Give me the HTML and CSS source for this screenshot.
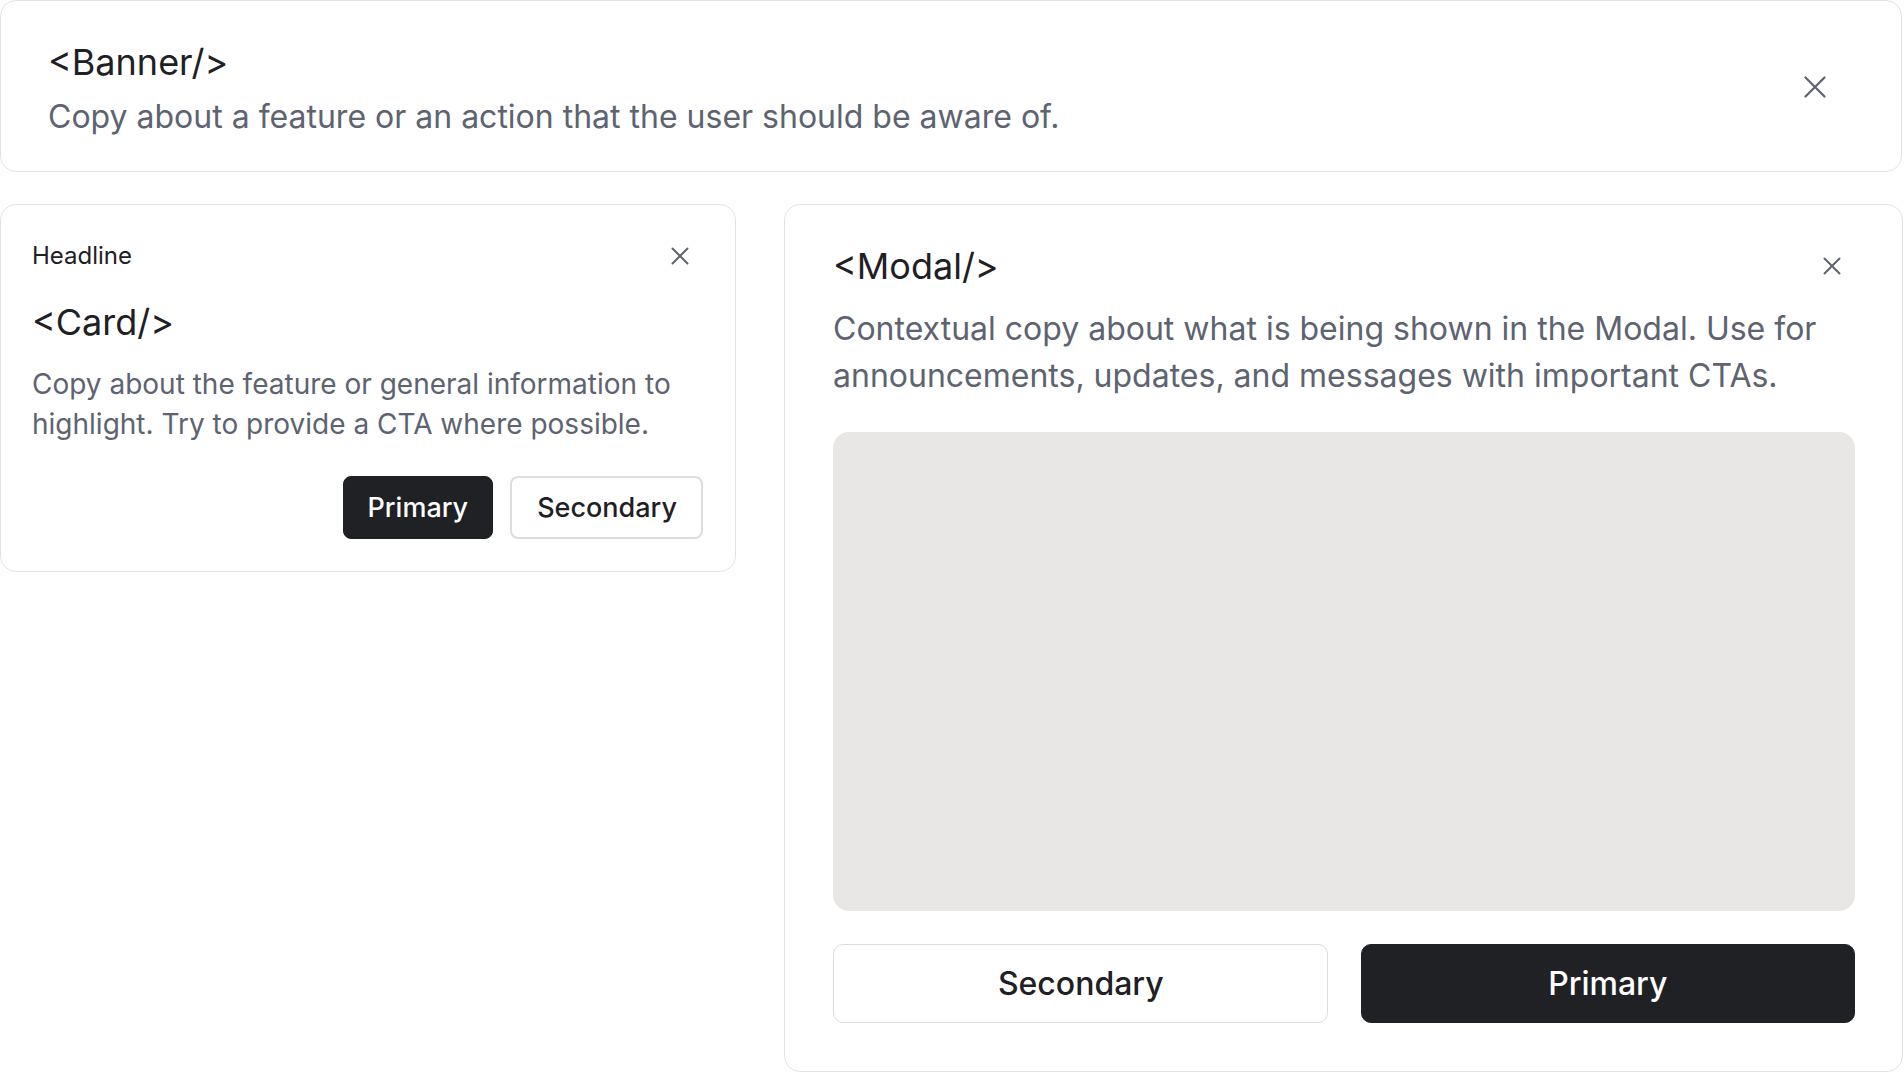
FILE: index.html
```html
<!DOCTYPE html>
<html lang="en">
<head>
<meta charset="utf-8">
<title>Components</title>
<link rel="stylesheet" href="styles.css">
</head>
<body>
<div class="page">
  <section class="banner">
    <div class="banner-text">
      <h2 class="title">&lt;Banner/&gt;</h2>
      <p class="banner-copy">Copy about a feature or an action that the user should be aware of.</p>
    </div>
    <button class="close close-lg" aria-label="Close">
      <svg width="22" height="22" viewBox="0 0 22 22"><path d="M1.5 1.5 L20.5 20.5 M20.5 1.5 L1.5 20.5" stroke="currentColor" stroke-width="2.2" stroke-linecap="round"/></svg>
    </button>
  </section>
  <div class="row">
    <section class="card">
      <div class="card-head">
        <span class="headline">Headline</span>
        <button class="close" aria-label="Close">
          <svg width="18" height="18" viewBox="0 0 18 18"><path d="M1.5 1.5 L16.5 16.5 M16.5 1.5 L1.5 16.5" stroke="currentColor" stroke-width="2" stroke-linecap="round"/></svg>
        </button>
      </div>
      <h2 class="title card-title">&lt;Card/&gt;</h2>
      <p class="card-copy">Copy about the feature or general information to highlight. Try to provide a CTA where possible.</p>
      <div class="card-actions">
        <button class="btn btn-primary">Primary</button>
        <button class="btn btn-secondary">Secondary</button>
      </div>
    </section>
    <section class="modal">
      <div class="modal-head">
        <h2 class="title">&lt;Modal/&gt;</h2>
        <button class="close" aria-label="Close">
          <svg width="18" height="18" viewBox="0 0 18 18"><path d="M1.5 1.5 L16.5 16.5 M16.5 1.5 L1.5 16.5" stroke="currentColor" stroke-width="2" stroke-linecap="round"/></svg>
        </button>
      </div>
      <p class="modal-copy">Contextual copy about what is being shown in the Modal. Use for announcements, updates, and messages with important CTAs.</p>
      <div class="placeholder"></div>
      <div class="modal-actions">
        <button class="btn btn-secondary btn-lg">Secondary</button>
        <button class="btn btn-primary btn-lg">Primary</button>
      </div>
    </section>
  </div>
</div>
</body>
</html>
```

FILE: styles.css
```css
* { box-sizing: border-box; }
html, body { margin: 0; padding: 0; background: #ffffff; }
body {
  font-family: Inter, "Noto Sans", "Liberation Sans", sans-serif;
  color: #1e2024;
}
.page {
  width: 1903px;
  display: flex;
  flex-direction: column;
  gap: 32px;
}
.banner {
  width: 1902px;
  height: 172px;
  border: 1px solid #e2e3e6;
  border-radius: 16px;
  display: flex;
  align-items: center;
  padding: 0 74px 0 47px;
}
.banner-text { flex: 1; padding-top: 6px; }
.title {
  margin: 0;
  font-size: 36px;
  line-height: 44px;
  font-weight: 400;
  color: #1e2024;
  letter-spacing: 0;
}
.banner-copy {
  margin: 11px 0 0;
  font-size: 32px;
  line-height: 44px;
  color: #5d6370;
}
.close {
  background: none;
  border: 0;
  padding: 0;
  color: #5d6370;
  display: flex;
  align-items: center;
  justify-content: center;
  cursor: pointer;
}
.close-lg { width: 24px; height: 24px; margin-top: 2px; }
.row {
  display: flex;
  align-items: flex-start;
  gap: 48px;
}
.card {
  width: 736px;
  border: 1px solid #e2e3e6;
  border-radius: 16px;
  padding: 32px 32px 32px 31px;
}
.card-head {
  display: flex;
  align-items: center;
  justify-content: space-between;
  height: 38px;
  padding-right: 14px;
}
.headline {
  font-size: 24px;
  line-height: 28px;
  font-weight: 400;
  color: #1e2024;
}
.card-title { margin-top: 25px; }
.card-copy {
  margin: 20px 0 0;
  font-size: 28px;
  line-height: 40px;
  color: #5d6370;
}
.card-actions {
  display: flex;
  justify-content: flex-end;
  gap: 17px;
  margin-top: 32px;
}
.btn {
  font-family: inherit;
  font-size: 27px;
  font-weight: 500;
  border-radius: 8px;
  height: 63px;
  padding: 0 24px;
  cursor: pointer;
}
.btn-primary {
  background: #1f2125;
  color: #ffffff;
  border: 1px solid #1f2125;
}
.btn-secondary {
  background: #ffffff;
  color: #1e2024;
  border: 2px solid #dcdde1;
  padding: 0 24px 0 25px;
}
.modal {
  flex: 1;
  height: 868px;
  border: 1px solid #e2e3e6;
  border-radius: 16px;
  padding: 39px 47px 47px 48px;
  display: flex;
  flex-direction: column;
}
.modal-head {
  display: flex;
  align-items: center;
  justify-content: space-between;
  height: 44px;
  padding-right: 14px;
}
.modal-copy {
  margin: 17px 0 0;
  font-size: 32px;
  line-height: 47px;
  color: #5d6370;
}
.placeholder {
  margin-top: 33px;
  height: 479px;
  background: #e8e7e5;
  border-radius: 16px;
}
.modal-actions {
  display: grid;
  grid-template-columns: 1fr 1fr;
  gap: 33px;
  margin-top: 33px;
}
.btn-lg {
  height: 79px;
  font-size: 32px;
  border-radius: 10px;
}
.modal-actions .btn-secondary { border-width: 1px; }
```
